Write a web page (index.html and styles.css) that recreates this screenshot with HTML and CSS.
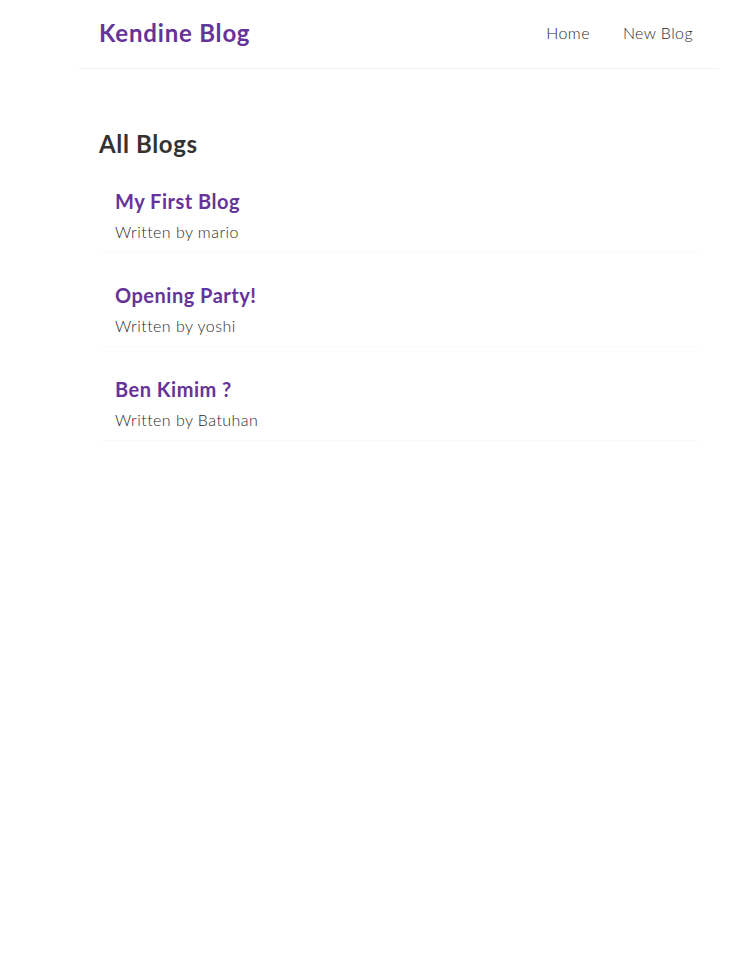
FILE: index.html
```html
<!DOCTYPE html>
<html lang="en">
<head>
<meta charset="utf-8">
<title>Kendine Blog</title>
<link rel="stylesheet" href="styles.css">
</head>
<body>
<div class="app">
  <nav class="navbar">
    <h1 class="brand">Kendine Blog</h1>
    <div class="links">
      <a href="#">Home</a>
      <a href="#">New Blog</a>
    </div>
  </nav>
  <main class="content">
    <h2 class="page-title">All Blogs</h2>
    <div class="blog-preview">
      <h2 class="blog-title">My First Blog</h2>
      <p class="blog-author">Written by mario</p>
    </div>
    <div class="blog-preview">
      <h2 class="blog-title">Opening Party!</h2>
      <p class="blog-author">Written by yoshi</p>
    </div>
    <div class="blog-preview">
      <h2 class="blog-title">Ben Kimim ?</h2>
      <p class="blog-author">Written by Batuhan</p>
    </div>
  </main>
</div>
</body>
</html>
```

FILE: styles.css
```css
* {
  margin: 0;
  box-sizing: content-box;
}
body {
  margin: 0;
  font-family: Lato, "Open Sans", sans-serif;
  color: #333;
  background: #fff;
}
.app {
  width: 640px;
  margin-left: 79px;
}
.navbar {
  padding: 17px 20px 19px;
  display: flex;
  align-items: center;
  border-bottom: 1px solid #f2f2f2;
}
.brand {
  font-size: 24px;
  line-height: 30px;
  font-weight: 700;
  letter-spacing: 0.8px;
  color: #663399;
}
.links {
  margin-left: auto;
  display: flex;
}
.links a {
  margin-left: 21px;
  padding: 6px;
  font-size: 16px;
  line-height: 20px;
  letter-spacing: 0.4px;
  text-decoration: none;
  color: #2b2b2b;
  font-weight: 300;
}
.content {
  margin: 40px 0;
  padding: 20px;
}
.page-title {
  font-size: 24px;
  line-height: 30px;
  font-weight: 700;
  letter-spacing: 0.65px;
  color: #333;
}
.blog-preview {
  padding: 10px 16px;
  margin: 20px 0;
  border-bottom: 1px solid #fafafa;
}
.blog-title {
  font-size: 20px;
  line-height: 25px;
  font-weight: 700;
  letter-spacing: 0.5px;
  color: #663399;
  margin-bottom: 8px;
}
.blog-author {
  font-size: 16px;
  line-height: 20px;
  letter-spacing: 0.45px;
  font-weight: 300;
  color: #2b2b2b;
}
```
